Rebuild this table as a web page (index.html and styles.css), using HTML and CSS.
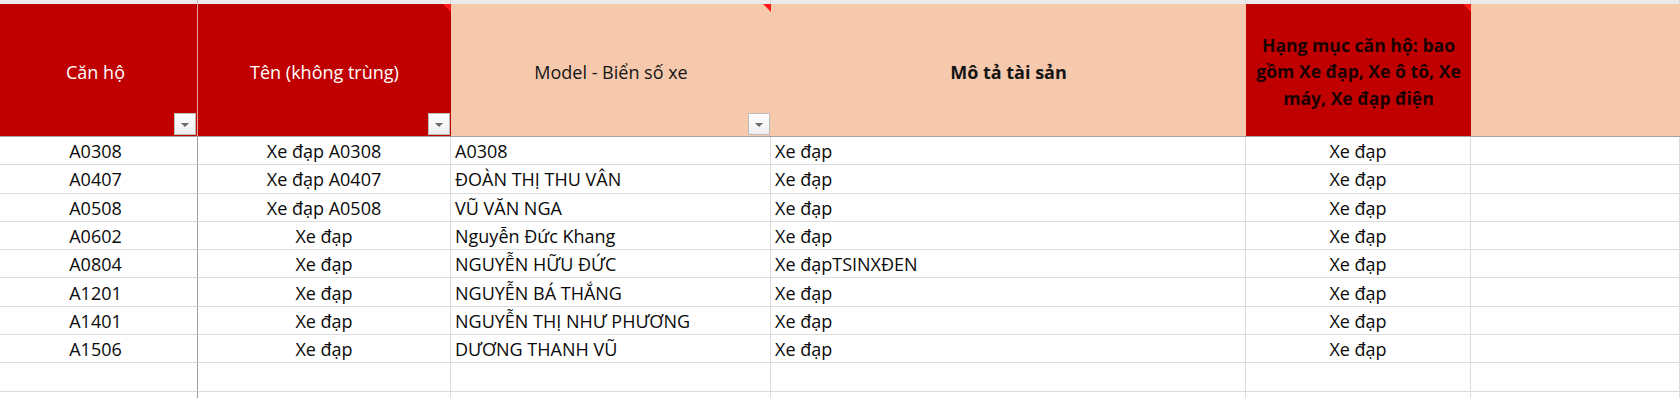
FILE: index.html
```html
<!DOCTYPE html>
<html lang="vi">
<head>
<meta charset="utf-8">
<title>Bảng tài sản</title>
<link rel="stylesheet" href="styles.css">
</head>
<body>
<div class="sheet">
  <div class="row strip">
    <div class="c c1"></div><div class="c"></div><div class="c"></div><div class="c"></div><div class="c"></div><div class="c"></div>
  </div>
  <div class="row head">
    <div class="h red white c1"><span>Căn hộ</span><i class="filter"></i></div>
    <div class="h red white"><span>Tên (không trùng)</span><i class="filter"></i><b class="note"></b></div>
    <div class="h peach"><span>Model - Biển số xe</span><i class="filter"></i><b class="note"></b></div>
    <div class="h peach bold"><span>Mô tả tài sản</span></div>
    <div class="h red bold multi"><span>Hạng mục căn hộ: bao<br>gồm Xe đạp, Xe ô tô, Xe<br>máy, Xe đạp điện</span><b class="note"></b></div>
    <div class="h peach"></div>
  </div>
  <div class="row"><div class="c c1 ctr">A0308</div><div class="c ctr">Xe đạp A0308</div><div class="c">A0308</div><div class="c">Xe đạp</div><div class="c ctr">Xe đạp</div><div class="c"></div></div>
  <div class="row"><div class="c c1 ctr">A0407</div><div class="c ctr">Xe đạp A0407</div><div class="c">ĐOÀN THỊ THU VÂN</div><div class="c">Xe đạp</div><div class="c ctr">Xe đạp</div><div class="c"></div></div>
  <div class="row"><div class="c c1 ctr">A0508</div><div class="c ctr">Xe đạp A0508</div><div class="c">VŨ VĂN NGA</div><div class="c">Xe đạp</div><div class="c ctr">Xe đạp</div><div class="c"></div></div>
  <div class="row"><div class="c c1 ctr">A0602</div><div class="c ctr">Xe đạp</div><div class="c">Nguyễn Đức Khang</div><div class="c">Xe đạp</div><div class="c ctr">Xe đạp</div><div class="c"></div></div>
  <div class="row"><div class="c c1 ctr">A0804</div><div class="c ctr">Xe đạp</div><div class="c">NGUYỄN HỮU ĐỨC</div><div class="c">Xe đạpTSINXĐEN</div><div class="c ctr">Xe đạp</div><div class="c"></div></div>
  <div class="row"><div class="c c1 ctr">A1201</div><div class="c ctr">Xe đạp</div><div class="c">NGUYỄN BÁ THẮNG</div><div class="c">Xe đạp</div><div class="c ctr">Xe đạp</div><div class="c"></div></div>
  <div class="row"><div class="c c1 ctr">A1401</div><div class="c ctr">Xe đạp</div><div class="c">NGUYỄN THỊ NHƯ PHƯƠNG</div><div class="c">Xe đạp</div><div class="c ctr">Xe đạp</div><div class="c"></div></div>
  <div class="row"><div class="c c1 ctr">A1506</div><div class="c ctr">Xe đạp</div><div class="c">DƯƠNG THANH VŨ</div><div class="c">Xe đạp</div><div class="c ctr">Xe đạp</div><div class="c"></div></div>
  <div class="row"><div class="c c1"></div><div class="c"></div><div class="c"></div><div class="c"></div><div class="c"></div><div class="c"></div></div>
  <div class="row"><div class="c c1"></div><div class="c"></div><div class="c"></div><div class="c"></div><div class="c"></div><div class="c"></div></div>
</div>
</body>
</html>
```

FILE: styles.css
```css
* { box-sizing: border-box; }
html, body { margin: 0; padding: 0; background: #ffffff; }
body { overflow: hidden; height: 398px; }

.sheet {
  width: 1680px;
  height: 398px;
  overflow: hidden;
  font-family: "Open Sans", "Noto Sans", sans-serif;
  font-size: 18px;
  color: #0a0a0a;
}

.row {
  display: grid;
  grid-template-columns: 198px 253px 320px 475px 225px 209px;
  height: 28.3px;
}

.c {
  border-right: 1px solid #dcdcdc;
  border-bottom: 1px solid #dcdcdc;
  padding: 1px 0 0 4px;
  display: flex;
  align-items: center;
  white-space: nowrap;
  overflow: hidden;
}
.c.c1 { border-right: 1px solid #9c9c9c; }
.c.ctr { justify-content: center; padding-left: 0; }
.c1.ctr { padding-right: 6px; }

.row.strip { height: 4px; background: #ebebeb; }
.row.strip .c { border-bottom: none; padding: 0; border-right-color: #d6d6d6; }
.row.strip .c.c1 { border-right-color: #b9b9b9; }

.row.head {
  height: 133px;
  border-bottom: 1px solid #a2a2a2;
}

.h {
  position: relative;
  display: flex;
  align-items: center;
  justify-content: center;
  text-align: center;
  padding-top: 3px;
}
.h.c1 { border-right: 1px solid #e7a2a2; padding-right: 6px; }
.red { background: #c00000; color: #1a0000; }
.red.white { color: #ffffff; }
.peach { background: #f6c9ad; color: #151515; }
.bold { font-weight: 700; }
.h.multi span {
  display: block;
  white-space: nowrap;
  line-height: 26.6px;
  font-size: 17.6px;
}

.filter {
  position: absolute;
  right: 1px;
  bottom: 1px;
  width: 22px;
  height: 22px;
  background: linear-gradient(#ffffff, #eeeeee);
  border: 1px solid #bcbcbc;
}
.filter::after {
  content: "";
  position: absolute;
  left: 6px;
  top: 9px;
  border-left: 4px solid transparent;
  border-right: 4px solid transparent;
  border-top: 4px solid #6a6a6a;
}

.note {
  position: absolute;
  top: 0;
  right: 0;
  width: 0;
  height: 0;
  border-top: 8px solid #ff1a1a;
  border-left: 8px solid transparent;
}
```
